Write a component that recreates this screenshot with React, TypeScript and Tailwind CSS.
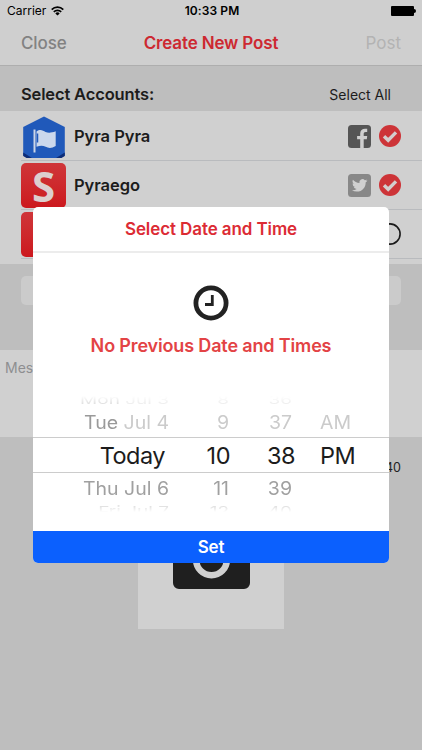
import React from 'react';
import { clsx } from 'clsx';

interface PickerRow {
  day: string;
  date: string;
  hour: string;
  minute: string;
  period: string;
  row: string;
  text: string;
  dayColor?: string;
}

// The wheel flattens and fades towards its top and bottom edges
const pickerRows: PickerRow[] = [
  { day: 'Mon', date: 'Jul 3', hour: '8', minute: '36', period: '', row: 'h-[10px] items-end mask-t-from-10%', text: 'h-[19px] text-[19px] leading-[19px] scale-y-[0.6] origin-bottom text-[#ececec]', dayColor: 'text-[#dcdcdc]' },
  { day: 'Tue', date: 'Jul 4', hour: '9', minute: '37', period: 'AM', row: 'h-[31px] items-center', text: 'h-[20px] text-[19.5px] leading-[20px] scale-y-[0.93] text-[#cbcbcb]', dayColor: 'text-[#9a9a9a]' },
  { day: 'Today', date: '', hour: '10', minute: '38', period: 'PM', row: 'h-[36px] items-center border-y border-[#cccccc]', text: 'pt-[1px] text-[23.5px] leading-[34px] tracking-[-0.5px] text-[#1c1c1c]' },
  { day: 'Thu', date: 'Jul 6', hour: '11', minute: '39', period: '', row: 'h-[30px] items-center', text: 'h-[20px] text-[19.5px] leading-[20px] scale-y-[0.93] text-[#a0a0a0]' },
  { day: 'Fri', date: 'Jul 7', hour: '12', minute: '40', period: '', row: 'h-[9px] items-start pt-[2px] mask-b-from-30%', text: 'h-[19px] text-[19px] leading-[19px] scale-y-[0.7] origin-top text-[#dedede]' },
];

const WifiGlyph = () => (
  <svg className="h-[10px] w-[13px]" viewBox="0 0 13 10">
    <g fill="none" stroke="#000" strokeWidth="1.7">
      <path d="M0.7 3.6a8.2 8.2 0 0 1 11.6 0" />
      <path d="M2.8 5.9a5.2 5.2 0 0 1 7.4 0" />
    </g>
    <path d="M6.5 9.6 4.3 7.4a3.1 3.1 0 0 1 4.4 0z" />
  </svg>
);

const HexagonAvatar = () => (
  <svg className="mt-[3px] h-[43px] w-[44px]" viewBox="0 0 44 43">
    <path d="M22 0.5 42.8 11v28.500L38 42H6l-4.800-2.500V11z" fill="#2059ba" />
    <path d="M1.200 36.500 10 42H4.500L1.200 40zM42.800 36.500 34 42h5.500l3.300-2z" fill="#0d2d78" />
    <path d="M12.500 13.500v23" stroke="#cbd5e7" strokeWidth="2" />
    <path d="M14.500 15.500c4-2.800 6.500-.7 9 .5 3 1.200 5.500 1 10.200-.700v14.800c-4 2.500-7.500 2.200-10 .7-3-1.500-5.500-1.400-9.200 0z" fill="#cbd8ec" />
    <path d="M15.500 17.500v9" stroke="#2059ba" strokeWidth="1.500" />
  </svg>
);

const RedAvatar = ({ letter }: { letter?: string }) => (
  <div className="mt-px flex h-[45px] w-[45px] items-center justify-center rounded-[5px] bg-linear-to-b from-[#cf3539] to-[#cc171d] font-['Open_Sans'] text-[42px] font-bold leading-[45px] text-[#dccfcf]">
    {letter}
  </div>
);

const FacebookGlyph = () => (
  <svg className="h-[23px] w-[23px]" viewBox="0 0 23 23">
    <rect width="23" height="23" rx="3.500" fill="#555" />
    <path d="M12.200 23v-8.800H9.100v-3.300h3.100V8.600c0-3.300 1.900-4.900 4.900-4.900h2.100v3.200h-1.500c-1.500 0-2 .7-2 2v2h3.500l-.4 3.300h-3.100V23z" fill="#cfcfcf" />
  </svg>
);

const TwitterGlyph = () => (
  <svg className="h-[23px] w-[23px]" viewBox="0 0 23 23">
    <rect width="23" height="23" rx="3.500" fill="#888" />
    <path transform="translate(3.900 3.700) scale(.64)" fill="#d0d0d0" d="M23.950 4.570a10 10 0 0 1-2.820.77 4.960 4.960 0 0 0 2.160-2.720c-.95.550-2 .95-3.130 1.180a4.920 4.920 0 0 0-8.380 4.480C7.690 8.090 4.070 6.130 1.640 3.160a4.820 4.820 0 0 0-.67 2.480c0 1.710.87 3.210 2.190 4.100a4.900 4.900 0 0 1-2.230-.62v.06a4.920 4.920 0 0 0 3.950 4.830 5 5 0 0 1-2.210.08 4.940 4.940 0 0 0 4.600 3.420A9.870 9.870 0 0 1 0 19.540a13.990 13.990 0 0 0 7.550 2.210c9.050 0 14-7.500 14-13.980 0-.21 0-.42-.02-.63a9.940 9.940 0 0 0 2.460-2.550z" />
  </svg>
);

const CheckGlyph = () => (
  <svg className="h-[22px] w-[22px]" viewBox="0 0 22 22">
    <circle cx="11" cy="11" r="11" fill="#cd3438" />
    <path d="m5 11.200 4.200 4.100 7.800-7.900" fill="none" stroke="#d3cdcd" strokeWidth="3.400" />
  </svg>
);

const EmptyCircle = () => (
  <svg className="h-[22px] w-[22px]" viewBox="0 0 22 22">
    <circle cx="11" cy="11" r="10.100" fill="none" stroke="#1a1a1a" strokeWidth="1.600" />
  </svg>
);

const ClockGlyph = () => (
  <svg className="h-[36px] w-[36px]" viewBox="0 0 36 36">
    <circle cx="18" cy="18" r="15.100" fill="none" stroke="#222" strokeWidth="4.800" />
    <path d="M19.300 10v9.500H12" fill="none" stroke="#222" strokeWidth="2.800" />
  </svg>
);

const CameraGlyph = () => (
  <svg className="h-[66px] w-[77px]" viewBox="0 0 77 66">
    <path d="M6 12h15l6-10h23l6 10h15a6 6 0 0 1 6 6v42a6 6 0 0 1-6 6H6a6 6 0 0 1-6-6V18a6 6 0 0 1 6-6z" fill="#1f1f1f" />
    <circle cx="38.500" cy="37" r="15.300" fill="none" stroke="#d0d0d0" strokeWidth="6.500" />
  </svg>
);

interface AccountRowProps {
  avatar: React.ReactNode;
  name?: string;
  network?: React.ReactNode;
  selected?: boolean;
}

const AccountRow = ({ avatar, name, network, selected }: AccountRowProps) => (
  <div className="ml-[21px] flex h-[49px] items-center border-b border-[#b9bbbe] pr-[21px]">
    <div className="flex w-[45px] shrink-0 justify-center">{avatar}</div>
    <span className="ml-2 text-[16.5px] font-semibold tracking-[-0.05px] text-[#1c1c1c]">{name}</span>
    <div className="ml-auto flex items-center gap-2">
      {network}
      {selected ? <CheckGlyph /> : <EmptyCircle />}
    </div>
  </div>
);

const DateTimeModal = () => (
  <div className="absolute left-[33px] top-[207px] flex h-[356px] w-[356px] flex-col overflow-hidden rounded-[5px] bg-white">
    <h2 className="flex h-[46px] shrink-0 items-center justify-center border-b-2 border-[#ececec] pt-[2px] text-[17px] font-semibold tracking-[-0.1px] text-[#dc2b34]">
      Select Date and Time
    </h2>
    <div className="flex h-[137px] shrink-0 flex-col items-center pt-[32px]">
      <ClockGlyph />
      <p className="mt-[11px] whitespace-nowrap text-[18px] font-semibold leading-[28px] tracking-[-0.15px] text-[#e34345]">No Previous Date and Times</p>
    </div>
    <div className="mt-[6px] flex h-[116px] shrink-0 flex-col">
      {pickerRows.map((r) => (
        <div key={r.minute} className={clsx('flex shrink-0 overflow-hidden', r.row)}>
          <div className={clsx('grid w-full shrink-0 grid-cols-[136px_61px_66px_93px] whitespace-nowrap', r.text)}>
            <span className={clsx('text-right', !r.date && 'pr-[4px]')}>
              <span className={r.dayColor}>{r.day}</span> {r.date}
            </span>
            <span className={clsx('text-right', r.date && 'pr-[1px]')}>{r.hour}</span>
            <span className="flex justify-end pr-[1px]">
              <span className={clsx(r.date && 'pr-[3px]')}>{r.minute}</span>
            </span>
            <span className="pl-[24px]">{r.period}</span>
          </div>
        </div>
      ))}
    </div>
    <button className="mt-auto h-[32px] shrink-0 bg-[#0b60fe] pt-[2px] text-[17px] font-semibold tracking-[-0.2px] text-white">Set</button>
  </div>
);

export default function App() {
  return (
    <div className="relative flex h-[750px] w-[422px] flex-col overflow-hidden bg-[#bebebe] font-['Inter',sans-serif]">
      <header className="h-[66px] shrink-0 border-b border-[#aeaeae] bg-[#cfcfcf]">
        <div className="grid h-[21px] grid-cols-[1fr_auto_1fr] items-center pl-[7px] pr-[6px] text-[12px] text-black">
          <div className="flex items-center gap-[5px]">
            <span>Carrier</span>
            <WifiGlyph />
          </div>
          <span className="pl-px pt-px text-center font-semibold tracking-[0.1px]">10:33 PM</span>
          <div className="flex items-center justify-end">
            <div className="h-[10px] w-[23px] rounded-[1px] bg-black" />
            <div className="h-[4px] w-[2px] rounded-r-full bg-black" />
          </div>
        </div>
        <div className="grid h-[44px] grid-cols-[1fr_auto_1fr] items-center px-[21px] pt-[2px] text-[17px]">
          <span className="font-medium tracking-[-0.1px] text-[#828282]">Close</span>
          <h1 className="font-semibold tracking-[-0.15px] text-[#cd2931]">Create New Post</h1>
          <span className="text-right text-[#b3b3b3]">Post</span>
        </div>
      </header>

      <div className="flex h-[45px] shrink-0 items-center justify-between pl-[21px] pr-[31px] pt-[10px] text-[#1c1c1c]">
        <span className="pt-px text-[16.5px] font-semibold tracking-[-0.15px]">Select Accounts:</span>
        <span className="pt-px text-[14px]">Select All</span>
      </div>

      <section className="h-[153px] shrink-0 bg-[#d0d0d0] pt-px">
        <AccountRow avatar={<HexagonAvatar />} name="Pyra Pyra" network={<FacebookGlyph />} selected />
        <AccountRow avatar={<RedAvatar letter="S" />} name="Pyraego" network={<TwitterGlyph />} selected />
        <AccountRow avatar={<RedAvatar />} />
      </section>

      <div className="mx-[21px] mt-[12px] h-[29px] shrink-0 rounded-[5px] bg-[#cbcbcb]" />
      <div className="mt-[45px] h-[87px] shrink-0 bg-[#d0d0d0] pl-[5px] pt-[8px] text-[14px] leading-[20px] text-[#8e8e90]">Message</div>
      <div className="mt-[21px] h-[19px] shrink-0 pr-[21px] text-right text-[12.5px] leading-[20px] text-[#222]">140</div>

      <div className="ml-[138px] mt-[6px] flex h-[146px] w-[146px] shrink-0 items-center justify-center bg-[#d0d0d0] pb-[1px]">
        <CameraGlyph />
      </div>

      <DateTimeModal />
    </div>
  );
}
